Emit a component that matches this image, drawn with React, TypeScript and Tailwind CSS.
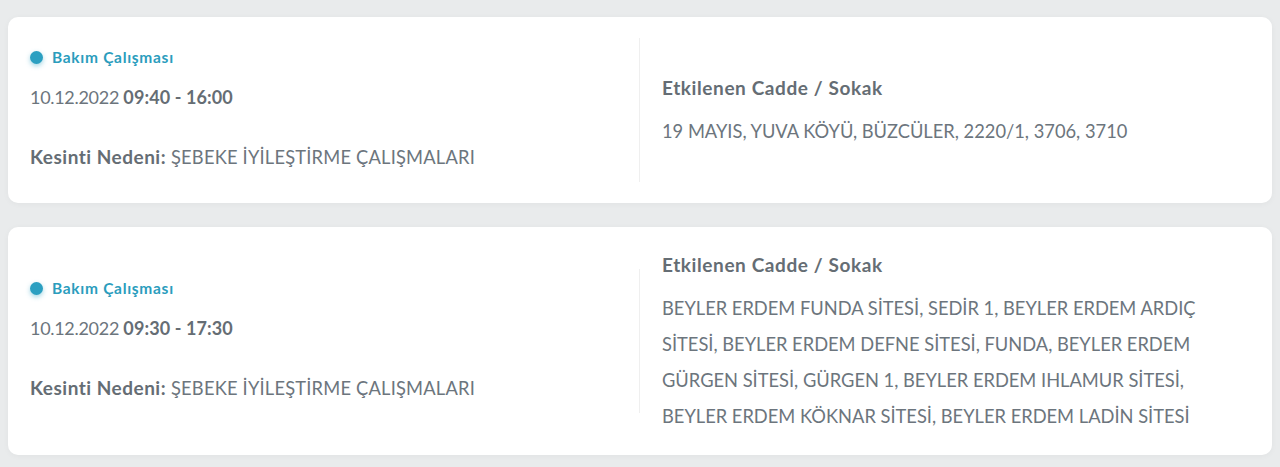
const outages = [
  {
    type: "Bakım Çalışması",
    date: "10.12.2022",
    time: "09:40 - 16:00",
    reason: "ŞEBEKE İYİLEŞTİRME ÇALIŞMALARI",
    streets: "19 MAYIS, YUVA KÖYÜ, BÜZCÜLER, 2220/1, 3706, 3710",
  },
  {
    type: "Bakım Çalışması",
    date: "10.12.2022",
    time: "09:30 - 17:30",
    reason: "ŞEBEKE İYİLEŞTİRME ÇALIŞMALARI",
    streets:
      "BEYLER ERDEM FUNDA SİTESİ, SEDİR 1, BEYLER ERDEM ARDIÇ SİTESİ, BEYLER ERDEM DEFNE SİTESİ, FUNDA, BEYLER ERDEM GÜRGEN SİTESİ, GÜRGEN 1, BEYLER ERDEM IHLAMUR SİTESİ, BEYLER ERDEM KÖKNAR SİTESİ, BEYLER ERDEM LADİN SİTESİ",
  },
];

type Outage = (typeof outages)[number];

const OutageCard = ({ item }: { item: Outage }) => (
  <div className="flex items-center rounded-[10px] bg-white py-[21px] shadow-[0_1px_6px_rgba(0,0,0,0.04)]">
    <div className="flex h-[144px] w-[632px] shrink-0 flex-col justify-center border-r border-[#efefef] pb-[4px] pl-[22px]">
      <div className="flex h-[20px] items-center gap-[9px]">
        <span className="h-[13px] w-[13px] rounded-full bg-[#2b9fc1] shadow-[0_2px_5px_rgba(43,159,193,0.45)]" />
        <span className="text-[15.5px] font-bold tracking-[0.7px] text-[#2b9dbd]">{item.type}</span>
      </div>
      <div className="mt-[17px] text-[18px] leading-[24px] tracking-[-0.3px] text-[#6c757d]">
        {item.date}{" "}
        <span className="font-bold tracking-[0.1px] text-[#656d74]">{item.time}</span>
      </div>
      <div className="mt-[36px] text-[18.3px] leading-[24px] tracking-[0.2px] text-[#6c757d]">
        <span className="text-[19px] font-bold tracking-[0.5px] text-[#656d74]">Kesinti Nedeni:</span> {item.reason}
      </div>
    </div>
    <div className="flex-1 pl-[22px] pt-[5px]">
      <div className="text-[19px] font-bold leading-[24px] tracking-[0.6px] text-[#656d74]">
        Etkilenen Cadde / Sokak
      </div>
      <div className="mt-[13px] max-w-[552px] text-[18.3px] leading-[36px] text-[#6c757d]">{item.streets}</div>
    </div>
  </div>
);

export default function App() {
  return (
    <div
      className="flex min-h-[467px] flex-col gap-[24px] bg-[#e9ebec] px-[8px] pt-[17px]"
      style={{ fontFamily: "Lato, 'Noto Sans', sans-serif" }}
    >
      {outages.map((o, i) => (
        <OutageCard key={i} item={o} />
      ))}
    </div>
  );
}
